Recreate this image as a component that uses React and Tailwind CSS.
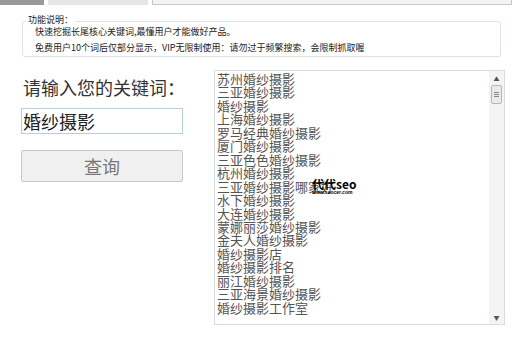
import React from 'react';

const words = [
    '苏州婚纱摄影', '三亚婚纱摄影', '婚纱摄影', '上海婚纱摄影', '罗马经典婚纱摄影', '厦门婚纱摄影',
    '三亚色色婚纱摄影', '杭州婚纱摄影', '三亚婚纱摄影哪家好', '水下婚纱摄影', '大连婚纱摄影',
    '蒙娜丽莎婚纱摄影', '金夫人婚纱摄影', '婚纱摄影店', '婚纱摄影排名', '丽江婚纱摄影',
    '三亚海景婚纱摄影', '婚纱摄影工作室'
];

const font = { fontFamily: '"SimSun", "Noto Sans CJK SC", sans-serif' };

export default function App() {
    return (
        <div className="w-[512px] h-[340px] bg-white overflow-hidden relative" style={font}>
            {/* tabs */}
            <div className="flex h-[5px] items-end">
                <div className="w-[44px] h-[5px] bg-[#9a9a9a]" />
                <div className="w-[100px] h-[5px] ml-[4px] bg-[#e6e6e6]" />
                <div className="flex-1 h-[5px] ml-[4px] border border-t-0 border-[#c8c8c8] bg-[#f4f4f4]" />
            </div>

            {/* group box */}
            <div className="relative mt-[16px] mx-[22px] w-[479px] h-[36px] border border-[#dde3e8] rounded-[3px] px-[12px] pt-[4px]">
                <span className="absolute left-[3px] top-[-8px] bg-white px-[2px] text-[9px] leading-[12px] text-[#222]">功能说明：</span>
                <div className="text-[9px] leading-[12px] text-[#222]">快速挖掘长尾核心关键词,最懂用户才能做好产品。</div>
                <div className="mt-[4px] text-[9px] leading-[12px] text-[#222]">免费用户10个词后仅部分显示，VIP无限制使用：请勿过于频繁搜索，会限制抓取喔</div>
            </div>

            <div className="flex mt-[13px]">
                {/* left column */}
                <div className="w-[214px] pl-[21px] pt-[6px]">
                    <div className="text-[18px] leading-[22px] text-[#333] pl-[2px]">请输入您的关键词：</div>
                    <div className="mt-[10px] w-[162px] h-[26px] border border-[#b8cde0] px-[1px] text-[18px] leading-[24px] text-[#222]">婚纱摄影</div>
                    <div className="mt-[16px] w-[162px] h-[32px] border border-[#c8c8c8] rounded-[2px] bg-[#f0f0f0] flex items-center justify-center text-[18px] text-[#777]">查询</div>
                </div>

                {/* listbox */}
                <div className="w-[291px] h-[255px] border border-[#d6dce2] flex">
                    <div className="flex-1 pl-[2px] pt-[1px]">
                        {words.map((w) => (
                            <div key={w} className="text-[13px] leading-[13.45px] text-[#555] whitespace-nowrap">{w}</div>
                        ))}
                    </div>
                    <div className="w-[15px] h-full bg-[#f4f4f4] flex flex-col items-center">
                        <div className="h-[14px] flex items-center text-[6px] text-[#555]">▲</div>
                        <div className="w-[11px] h-[19px] border border-[#b5b5b5] rounded-[2px] bg-[#eaeaea] flex flex-col items-center justify-center gap-[1px]">
                            <div className="w-[5px] h-[1px] bg-[#888]" />
                            <div className="w-[5px] h-[1px] bg-[#888]" />
                            <div className="w-[5px] h-[1px] bg-[#888]" />
                        </div>
                        <div className="flex-1" />
                        <div className="h-[14px] flex items-center text-[6px] text-[#555]">▼</div>
                    </div>
                </div>
            </div>

            {/* watermark */}
            <div className="absolute left-[312px] top-[178px] flex flex-col leading-none">
                <span className="text-[12px] font-bold text-black" style={{ fontFamily: '"Noto Sans CJK SC", sans-serif' }}>代代seo</span>
                <span className="text-[5px] font-bold text-black" style={{ fontFamily: '"Liberation Sans", sans-serif' }}>www.seocer.com</span>
            </div>
        </div>
    );
}
